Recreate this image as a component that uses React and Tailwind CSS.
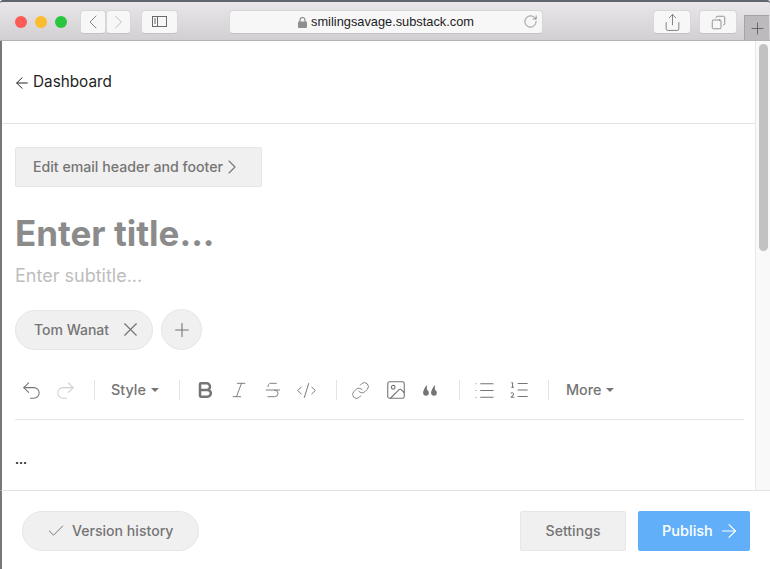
import React from 'react';
import {
  ArrowLeft, ArrowRight, Bold, Check, ChevronLeft, ChevronRight, CodeXml, Copy, Image, Italic, Link,
  List, ListOrdered, Plus, Redo2, RotateCw, Share, Strikethrough, Undo2, X,
} from 'lucide-react';

const Sep = ({ className = '' }) => <div className={`w-px h-5 bg-[#e4e4e4] ${className}`} />;

const Caret = () => <span className="ml-[5px] mt-[1px] w-0 h-0 border-x-[4.5px] border-x-transparent border-t-[4px] border-t-[#757575]" />;

const ToolIcon = ({ children, className = 'w-[34px]' }) => (
  <div className={`flex justify-center items-center text-[#757575] ${className}`}>{children}</div>
);

const ChromeBtn = ({ className = '', children }) => (
  <div className={`h-[24px] flex items-center justify-center bg-[#f8f7f8] rounded-[4px] border border-[#d8d6d8] border-b-[#c4c2c4] ${className}`}>
    {children}
  </div>
);

export default function App() {
  return (
    <div className="w-[770px] h-[569px] flex flex-col overflow-hidden bg-white font-['Inter',sans-serif]">
      {/* ── Safari toolbar ───────────────────────────────────────────── */}
      <div className="h-[41px] shrink-0 flex flex-col bg-gradient-to-b from-[#e9e7e9] to-[#d1cfd1] border-t-[2px] border-t-[#5f6670] border-b border-b-[#b4b2b4] rounded-t-[3px]">
        <div className="flex items-start h-full pt-[8px] font-['Liberation_Sans',sans-serif]">
          <div className="flex gap-[8px] ml-[15px] mt-[6px]">
            <span className="w-[12px] h-[12px] rounded-full bg-[#fc5b57]" />
            <span className="w-[12px] h-[12px] rounded-full bg-[#fdbc2e]" />
            <span className="w-[12px] h-[12px] rounded-full bg-[#29c73f]" />
          </div>
          <ChromeBtn className="w-[26px] ml-[13px]">
            <ChevronLeft size={24} strokeWidth={0.9} className="text-[#777]" />
          </ChromeBtn>
          <ChromeBtn className="w-[25px]">
            <ChevronRight size={24} strokeWidth={0.9} className="text-[#b5b5b5]" />
          </ChromeBtn>
          <ChromeBtn className="w-[37px] ml-[10px]">
            <svg width="16" height="12" viewBox="0 0 16 12" fill="none" stroke="#6a6a6a" strokeWidth="1">
              <rect x="0.5" y="0.5" width="14" height="10" />
              <path d="M5.5 0.5v10M2 3h2M2 5h2M2 7h2" />
            </svg>
          </ChromeBtn>
          <ChromeBtn className="w-[314px] ml-[51px] relative">
            <svg width="9" height="11" viewBox="0 0 9 11" className="mr-[4px]" fill="#8e8e8e">
              <rect x="0" y="4.5" width="9" height="6.5" rx="1" />
              <path d="M2 5V3a2.5 2.5 0 0 1 5 0v2" fill="none" stroke="#8e8e8e" strokeWidth="1.2" />
            </svg>
            <span className="text-[12.8px] text-[#1c1c1c] leading-none pt-[1px]">smilingsavage.substack.com</span>
            <RotateCw size={15} strokeWidth={1.1} className="absolute right-[4px] top-[3px] text-[#666]" />
          </ChromeBtn>
          <ChromeBtn className="w-[38px] ml-[110px]">
            <Share size={19} strokeWidth={1} className="text-[#666]" />
          </ChromeBtn>
          <ChromeBtn className="w-[38px] ml-[8px]">
            <Copy size={15} strokeWidth={1.1} className="text-[#666] -scale-x-100" />
          </ChromeBtn>
          <div className="w-[25px] h-[25px] ml-[7px] mt-[5px] flex items-center justify-center bg-[#bcbabc] border-l border-t border-[#a5a3a5]">
            <Plus size={19} strokeWidth={1} className="text-[#555]" />
          </div>
        </div>
      </div>

      {/* ── Page area ────────────────────────────────────────────────── */}
      <div className="flex-1 min-h-0 flex border-l-[2px] border-l-[#777]">
        <div className="flex-1 min-w-0 flex flex-col">
          <div className="h-[83px] shrink-0 flex items-center pl-[11px] pt-[1px] border-b border-[#e2e2e2] text-[15.3px] text-[#1f1f1f]">
            <ArrowLeft size={18} strokeWidth={1.3} className="mr-[2px]" />
            Dashboard
          </div>

          <div className="pl-[13px] pr-[11px]">
            <div className="mt-[23px] w-[247px] h-[40px] flex items-center pl-[17px] pb-[1px] bg-[#f0f0f0] border border-[#e6e6e6] rounded-[2px] text-[14.15px] font-medium text-[#757575]">
              Edit email header and footer
              <ChevronRight size={24} strokeWidth={1.1} className="-ml-[3px] mt-[1px]" />
            </div>

            <div className="mt-[22px] h-[48px] flex items-center text-[35px] font-bold leading-none text-[#8b8b8b]">Enter title...</div>
            <div className="mt-[5px] h-[27px] flex items-center text-[18px] leading-none text-[#bdbdbd]">Enter subtitle...</div>

            <div className="mt-[20px] flex items-center">
              <div className="w-[138px] h-[40px] flex items-center pl-[18px] bg-[#f0f0f0] border border-[#e6e6e6] rounded-full text-[14px] font-medium text-[#757575]">
                Tom Wanat
                <X size={23} strokeWidth={1.2} className="ml-[10px]" />
              </div>
              <div className="w-[41px] h-[41px] ml-[8px] flex items-center justify-center bg-[#f0f0f0] border border-[#e6e6e6] rounded-full text-[#757575]">
                <Plus size={22} strokeWidth={1.2} />
              </div>
            </div>

            <div className="mt-[20px] h-[40px] flex items-center text-[14.4px] font-medium text-[#757575]">
              <ToolIcon className="w-[34px] ml-[-1px]"><Undo2 size={23} strokeWidth={1.1} /></ToolIcon>
              <ToolIcon className="w-[34px] text-[#cfcfcf]"><Redo2 size={23} strokeWidth={1.1} /></ToolIcon>
              <Sep className="ml-[12px]" />
              <div className="flex items-center ml-[16px]">Style<Caret /></div>
              <Sep className="ml-[20px]" />
              <ToolIcon className="w-[34px] ml-[8px]"><Bold size={20} strokeWidth={3} /></ToolIcon>
              <ToolIcon><Italic size={20} strokeWidth={1.1} /></ToolIcon>
              <ToolIcon><Strikethrough size={20} strokeWidth={1.1} /></ToolIcon>
              <ToolIcon><CodeXml size={21} strokeWidth={1.1} /></ToolIcon>
              <Sep className="ml-[12px]" />
              <ToolIcon className="w-[34px] ml-[7px]"><Link size={19} strokeWidth={1.1} /></ToolIcon>
              <ToolIcon className="w-[36px]"><Image size={22} strokeWidth={1.2} /></ToolIcon>
              <ToolIcon className="w-[33px]">
                <svg width="14" height="11" viewBox="0 0 14 11" fill="#757575">
                  <circle cx="3" cy="8" r="2.8" />
                  <path d="M0.3 8 C0.3 5 1.8 2.5 3.4 0.5 L4.2 0.8 C3.4 3 3.6 4.5 5.6 7 Z" />
                  <circle cx="11" cy="8" r="2.8" />
                  <path d="M8.3 8 C8.3 5 9.8 2.5 11.4 0.5 L12.2 0.8 C11.4 3 11.6 4.5 13.6 7 Z" />
                </svg>
              </ToolIcon>
              <Sep className="ml-[12px]" />
              <ToolIcon className="w-[34px] ml-[8px]"><List size={23} strokeWidth={1.1} /></ToolIcon>
              <ToolIcon><ListOrdered size={22} strokeWidth={1.1} /></ToolIcon>
              <Sep className="ml-[12px]" />
              <div className="flex items-center ml-[17px]">More<Caret /></div>
            </div>

            <div className="mt-[9px] h-px bg-[#e6e6e6]" />
            <div className="mt-[30px] text-[12px] leading-[20px] font-bold text-[#222]">...</div>
          </div>
        </div>

        {/* scrollbar */}
        <div className="w-[15px] shrink-0 pt-[3px] pl-[3px] bg-[#f9f9f9] border-l border-[#e8e8e8]">
          <div className="w-[9px] h-[207px] rounded-full bg-[#c2c2c2]" />
        </div>
      </div>

      {/* ── Footer ───────────────────────────────────────────────────── */}
      <div className="h-[79px] shrink-0 flex items-center pt-[2px] pl-[22px] pr-[20px] bg-white border-t border-[#e2e2e2] border-l-[2px] border-l-[#777] text-[14.1px] font-medium text-[#757575]">
        <div className="-ml-[2px] w-[177px] h-[40px] flex items-center pl-[23px] bg-[#f0f0f0] border border-[#e6e6e6] rounded-full">
          <Check size={20} strokeWidth={1.2} className="mr-[6px]" />
          Version history
        </div>
        <div className="ml-auto w-[106px] h-[40px] flex items-center justify-center bg-[#f0f0f0] border border-[#e6e6e6] rounded-[2px]">
          Settings
        </div>
        <div className="ml-[12px] w-[112px] h-[40px] flex items-center pl-[24px] bg-[#61aff8] rounded-[2px] text-[14.5px] text-white">
          Publish
          <ArrowRight size={22} strokeWidth={1.2} className="ml-[5px]" />
        </div>
      </div>
    </div>
  );
}
